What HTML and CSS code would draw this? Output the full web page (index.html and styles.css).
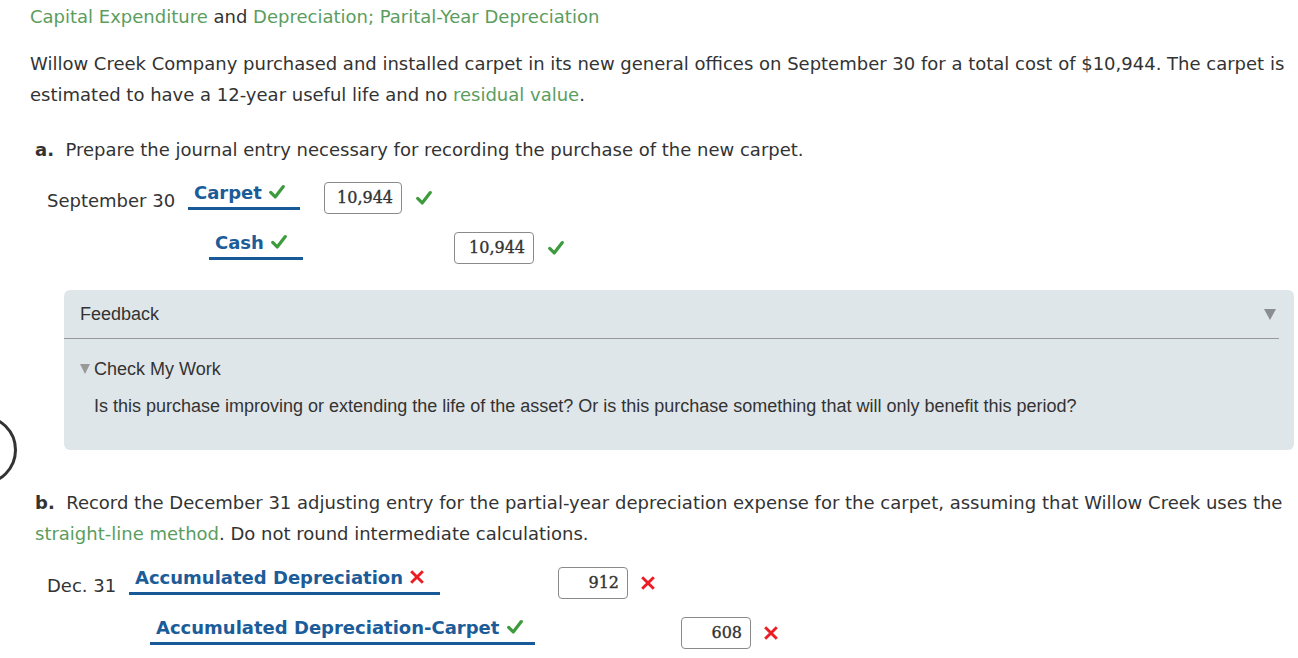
FILE: index.html
```html
<!DOCTYPE html>
<html>
<head>
<meta charset="utf-8">
<link rel="stylesheet" href="styles.css">
</head>
<body>
<div class="page">
  <div class="title"><span class="term">Capital Expenditure</span> and <span class="term">Depreciation; Parital-Year Depreciation</span></div>
  <p class="intro">Willow Creek Company purchased and installed carpet in its new general offices on September 30 for a total cost of $10,944. The carpet is estimated to have a 12-year useful life and no <span class="term">residual value</span>.</p>

  <p class="q"><b>a.</b>&nbsp; Prepare the journal entry necessary for recording the purchase of the new carpet.</p>

  <div class="journal ja">
    <div class="jrow">
      <div class="date">September 30</div>
      <div class="acct acct-carpet">Carpet <span class="ok"><svg viewBox="0 0 20 20" width="18" height="18"><path d="M3 10.5 L8 15.5 L17 4" fill="none" stroke="#3d9b3d" stroke-width="3.6" stroke-linecap="round" stroke-linejoin="round"/></svg></span></div>
      <div class="amt debit1">10,944</div>
      <span class="mark"><svg viewBox="0 0 20 20" width="18" height="18"><path d="M3 10.5 L8 15.5 L17 4" fill="none" stroke="#3d9b3d" stroke-width="3.6" stroke-linecap="round" stroke-linejoin="round"/></svg></span>
    </div>
    <div class="jrow">
      <div class="date"></div>
      <div class="acct credit acct-cash">Cash <span class="ok"><svg viewBox="0 0 20 20" width="18" height="18"><path d="M3 10.5 L8 15.5 L17 4" fill="none" stroke="#3d9b3d" stroke-width="3.6" stroke-linecap="round" stroke-linejoin="round"/></svg></span></div>
      <div class="amt credit1">10,944</div>
      <span class="mark"><svg viewBox="0 0 20 20" width="18" height="18"><path d="M3 10.5 L8 15.5 L17 4" fill="none" stroke="#3d9b3d" stroke-width="3.6" stroke-linecap="round" stroke-linejoin="round"/></svg></span>
    </div>
  </div>

  <div class="feedback">
    <div class="fb-head">Feedback<span class="fb-tri"></span></div>
    <div class="fb-rule"></div>
    <div class="fb-check"><span class="small-tri"></span>Check My Work</div>
    <div class="fb-text">Is this purchase improving or extending the life of the asset? Or is this purchase something that will only benefit this period?</div>
  </div>

  <p class="q qb"><b>b.</b>&nbsp; Record the December 31 adjusting entry for the partial-year depreciation expense for the carpet, assuming that Willow Creek uses the <span class="term">straight-line method</span>. Do not round intermediate calculations.</p>

  <div class="journal jb">
    <div class="jrow">
      <div class="date date-b">Dec. 31</div>
      <div class="acct acct-ad">Accumulated Depreciation <span class="bad"><svg viewBox="0 0 20 20" width="16" height="18"><path d="M4 4 L16 16 M16 4 L4 16" fill="none" stroke="#ec1c24" stroke-width="3.6" stroke-linecap="square"/></svg></span></div>
      <div class="amt debit2">912</div>
      <span class="mark"><svg viewBox="0 0 20 20" width="16" height="18"><path d="M4 4 L16 16 M16 4 L4 16" fill="none" stroke="#ec1c24" stroke-width="3.6" stroke-linecap="square"/></svg></span>
    </div>
    <div class="jrow">
      <div class="date date-b"></div>
      <div class="acct credit acct-adc">Accumulated Depreciation-Carpet <span class="ok"><svg viewBox="0 0 20 20" width="18" height="18"><path d="M3 10.5 L8 15.5 L17 4" fill="none" stroke="#3d9b3d" stroke-width="3.6" stroke-linecap="round" stroke-linejoin="round"/></svg></span></div>
      <div class="amt credit2">608</div>
      <span class="mark"><svg viewBox="0 0 20 20" width="16" height="18"><path d="M4 4 L16 16 M16 4 L4 16" fill="none" stroke="#ec1c24" stroke-width="3.6" stroke-linecap="square"/></svg></span>
    </div>
  </div>
</div>
<div class="circle"></div>
</body>
</html>
```
FILE: styles.css
```css
html, body {
  margin: 0;
  padding: 0;
  background: #fff;
}
body {
  font-family: "DejaVu Sans", Verdana, sans-serif;
  font-size: 18px;
  letter-spacing: 0;
  color: #333;
  overflow: hidden;
  position: relative;
  height: 658px;
}
.page {
  padding-left: 30px;
  padding-right: 4px;
}
.title {
  padding-top: 6px;
  line-height: 22px;
}
.term {
  color: #5b9d5e;
}
.intro {
  margin: 20px 0 0 0;
  line-height: 31px;
}
.q {
  margin: 24px 0 0 5px;
  line-height: 31px;
}
.q b {
  font-weight: bold;
}
.journal {
  margin-top: 17px;
}
.jrow {
  display: flex;
  align-items: flex-start;
  height: 50px;
}
.date {
  width: 141px;
  margin-left: 17px;
  margin-top: 9px;
  line-height: 20px;
  flex: none;
}
.date-b {
  width: 82px;
}
.acct {
  flex: none;
  font-weight: bold;
  color: #1b5c99;
  font-size: 18px;
  line-height: 20px;
  padding: 1px 0 4px 6px;
  border-bottom: 3px solid #175a97;
  white-space: nowrap;
  box-sizing: border-box;
  height: 28px;
}
.acct.credit {
  margin-left: 21px;
}
.acct svg {
  vertical-align: -2px;
}
.acct-carpet { width: 112px; }
.acct-cash { width: 94px; }
.acct-ad { width: 311px; }
.acct-adc { width: 385px; }
.amt {
  flex: none;
  box-sizing: border-box;
  height: 32px;
  border: 1px solid #8a8a8a;
  border-radius: 4px;
  background: #fff;
  font-family: "DejaVu Serif", "Liberation Serif", serif;
  font-size: 16px;
  -webkit-text-stroke: 0.35px #333;
  line-height: 30px;
  text-align: right;
  padding-right: 8px;
  color: #333;
}
.debit1 { margin-left: 24px; width: 78px; }
.credit1 { margin-left: 151px; width: 80px; }
.debit2 { margin-left: 118px; width: 70px; }
.credit2 { margin-left: 146px; width: 70px; }
.mark {
  flex: none;
  margin-left: 13px;
  margin-top: 7px;
  line-height: 0;
}
.jb .mark {
  margin-left: 12px;
}
.feedback {
  margin: 8px 0 0 34px;
  height: 160px;
  box-sizing: border-box;
  background: #dfe6e9;
  border-radius: 6px;
  font-family: "Liberation Sans", Arial, sans-serif;
  font-size: 18px;
  color: #333;
  padding-top: 13px;
}
.fb-head {
  display: flex;
  justify-content: space-between;
  align-items: center;
  padding: 0 18px 0 16px;
  line-height: 22px;
}
.fb-tri {
  width: 0;
  height: 0;
  border-left: 6px solid transparent;
  border-right: 6px solid transparent;
  border-top: 11px solid #8a8e90;
}
.fb-rule {
  margin: 13px 15px 0 0;
  border-top: 1px solid #999;
}
.fb-check {
  margin-top: 19px;
  padding-left: 16px;
  line-height: 22px;
  display: flex;
  align-items: center;
}
.small-tri {
  width: 0;
  height: 0;
  border-left: 5px solid transparent;
  border-right: 5px solid transparent;
  border-top: 10px solid #999;
  margin-right: 4px;
}
.fb-text {
  margin-top: 15px;
  padding-left: 30px;
  line-height: 22px;
}
.qb {
  margin-top: 37px;
}
.jb {
  margin-top: 18px;
}
.circle {
  position: absolute;
  left: -53px;
  top: 415px;
  width: 64px;
  height: 64px;
  border: 3px solid #333;
  border-radius: 50%;
}
```
